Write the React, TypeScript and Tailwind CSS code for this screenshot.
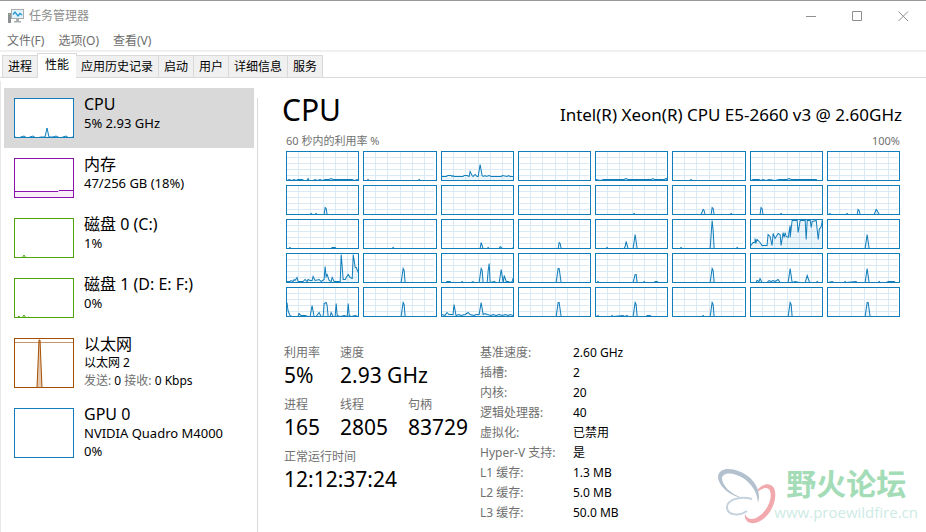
import { useState } from "react"
import clsx from "clsx"

const menus = ["文件(F)", "选项(O)", "查看(V)"]

const tabs = ["进程", "性能", "应用历史记录", "启动", "用户", "详细信息", "服务"]

// inner plot size of one logical processor, baseline is the bottom edge
const W = 71
const H = 28

const SPIKE = "0,28 37,28 39,14 40,16 41,28 71,28"
const SPIKE_WIDE = "0,28 37,28 39,14 40,14 42,28 71,28"

const cores = [
  // row 1
  "0,28 2,27 5,28 7,27 9,28 11,27 15,27 17,28 20,28 21,26 22,28 26,28 28,27 30,28 33,27 35,28 38,27 42,27 44,26 46,27 52,27 58,27 65,27 67,28 70,27 71,28",
  "0,28 3,28 4,27 5,28 54,28 55,27 56,28 71,28",
  "0,24 4,24 6,23 9,23 10,24 11,23 12,24 21,24 22,23 25,23 27,24 28,19 30,23 31,24 33,22 35,24 36,24 38,12 40,23 41,24 43,23 44,24 47,23 49,24 59,24 60,23 65,24 66,23 68,24 71,24",
  "",
  "0,27 4,28 8,27 20,27 28,27 30,26 32,27 40,27 55,27 57,26 58,27 68,27 70,26 71,28",
  "0,28 17,28 18,27 19,28 71,28",
  "0,28 2,27 8,27 10,28 12,27 15,28 18,27 24,28 28,27 36,27 38,26 40,27 50,27 65,27 66,28 71,28",
  "",
  // row 2
  "0,28 23,28 24,27 25,28 28,28 29,27 30,28 37,28 38,21 39,22 40,28 71,28",
  "",
  "",
  "",
  "0,28 37,28 38,27 39,28 71,28",
  "0,28 28,28 30,23 31,24 32,28 38,28 39,21 40,22 41,28 57,28 58,27 59,28 71,28",
  "0,28 9,28 10,21 11,22 12,28 29,28 30,27 31,28 71,28",
  "0,28 2,27 3,28 18,28 19,27 20,28 29,28 30,23 31,24 32,28 46,28 48,23 49,24 51,28 71,28",
  // row 3
  "0,28 2,28 3,27 4,28 44,28 45,27 48,27 49,28 71,28",
  "0,28 28,28 29,27 30,28 71,28",
  "0,28 38,28 39,22 41,28 45,28 46,27 47,28 57,28 58,26 60,28 70,28 71,27",
  "0,28 39,28 40,22 41,23 42,28 71,28",
  "0,28 10,28 11,27 12,28 28,28 29,26 30,21 32,28 37,28 39,14 41,28 71,28",
  "0,28 7,28 8,27 9,28 37,28 39,0 40,10 41,28 63,28 64,27 65,28 71,28",
  "0,25 2,22 4,22 4,18 5,22 6,19 9,22 11,25 16,25 17,14 19,16 21,25 22,13 24,18 27,13 29,14 30,25 32,12 33,17 34,12 35,16 37,17 39,5 39,17 41,0 46,0 47,12 49,0 54,0 55,19 56,0 59,0 60,7 61,1 65,0 67,19 68,9 70,6 71,0",
  "0,28 37,28 39,14 41,28 71,28",
  // row 4
  "0,27 3,27 4,26 6,27 7,25 8,26 10,23 11,27 16,27 18,25 20,27 21,25 23,26 25,26 26,22 28,26 32,25 34,27 37,25 38,12 39,22 40,20 42,26 44,27 45,23 47,27 53,27 54,0 56,25 58,25 59,23 61,20 63,23 65,24 66,0 68,13 69,13 71,18",
  SPIKE,
  "0,28 4,28 5,27 8,27 9,28 19,28 20,27 21,28 29,28 31,27 32,28 37,28 39,14 40,16 41,28 45,28 46,16 47,9 48,28 52,27 54,28 57,28 59,15 61,28 62,21 64,27 66,27 68,28 70,27 71,23",
  SPIKE_WIDE,
  "0,28 1,28 2,27 3,28 37,28 39,20 40,20 41,28 47,28 48,27 49,28 58,28 59,27 61,27 62,28 71,28",
  SPIKE,
  "0,28 5,28 6,26 8,27 9,24 11,28 16,28 18,26 20,27 22,26 24,27 27,25 29,28 37,28 39,14 41,28 44,27 48,28 54,28 56,21 58,27 59,28 65,28 66,27 67,28 71,28",
  "0,28 4,27 6,28 16,28 17,27 18,28 28,27 29,28 37,28 39,14 41,28 50,28 51,27 52,28 58,28 60,27 66,27 67,28 71,28",
  // row 5
  "0,14 1,22 3,27 5,28 11,28 12,25 14,27 18,27 21,28 23,28 25,17 27,28 29,28 32,24 34,28 36,28 37,15 39,14 40,17 41,28 43,28 44,24 46,28 48,28 49,15 50,27 53,28 57,27 60,28 61,15 62,27 64,28 68,27 71,28",
  SPIKE,
  "0,26 3,27 5,24 7,26 10,26 11,26 12,16 14,27 17,26 19,27 23,26 26,24 28,26 32,27 34,26 37,26 39,14 41,26 43,25 45,26 49,27 51,26 54,27 57,26 60,27 63,26 66,27 68,26 71,27",
  SPIKE_WIDE,
  "0,28 2,27 3,28 15,28 16,27 17,28 27,27 28,28 31,27 32,28 37,28 39,14 40,16 41,28 50,28 51,27 54,27 55,28 71,28",
  "0,28 29,28 30,27 31,28 37,28 39,14 40,16 41,28 71,28",
  SPIKE,
  SPIKE_WIDE,
]

const devices = [
  {
    name: "CPU",
    lines: ["5% 2.93 GHz"],
    box: "h-10 border-[#117dbb] text-[#117dbb]",
    points: "0,37 3,38 6,37 9,36 12,38 15,37 18,36 21,38 26,37 30,37 32,28 34,37 38,37 41,36 45,38 48,37 51,36 54,38 58,37",
    height: 38,
  },
  {
    name: "内存",
    lines: ["47/256 GB (18%)"],
    box: "h-10 border-[#8b12ae] text-[#8b12ae]",
    points: "0,31.500 43,31.500 44,30.500 58,30.500",
    height: 38,
  },
  {
    name: "磁盘 0 (C:)",
    lines: ["1%"],
    box: "h-10 border-[#4da60c] text-[#4da60c]",
    points: "0,38 7,38 9,35 11,38 15,38 16,37 17,38 58,38",
    height: 38,
  },
  {
    name: "磁盘 1 (D: E: F:)",
    lines: ["0%"],
    box: "h-10 border-[#4da60c] text-[#4da60c]",
    points: "0,38 2,38 4,36 5,38 7,38 9,35 11,38 14,37 15,38 58,38",
    height: 38,
  },
  {
    name: "以太网",
    lines: [],
    adapter: "以太网 2",
    box: "h-[50px] border-[#a74f01] text-[#a74f01]",
    points: "0,48 22,48 24,0 25,0 27,48 58,48",
    height: 48,
  },
  {
    name: "GPU 0",
    lines: ["NVIDIA Quadro M4000", "0%"],
    box: "h-[50px] border-[#117dbb] text-[#117dbb]",
    points: "",
    height: 48,
  },
]

const specs = [
  ["基准速度:", "2.60 GHz"],
  ["插槽:", "2"],
  ["内核:", "20"],
  ["逻辑处理器:", "40"],
  ["虚拟化:", "已禁用"],
  ["Hyper-V 支持:", "是"],
  ["L1 缓存:", "1.3 MB"],
  ["L2 缓存:", "5.0 MB"],
  ["L3 缓存:", "50.0 MB"],
]

function AppIcon() {
  return (
    <svg width="16" height="14" viewBox="0 0 16 14" fill="none">
      <path d="M0 4h3v10H0z" fill="#8c9093" />
      <path d="M1 5.500h1" stroke="#8fd07a" />
      <rect x="3.500" y="0.500" width="12" height="9" fill="#dff1fb" stroke="#a9adb0" />
      <path d="M5 5.500 7 3l3 4 2-2.500 2 1.500" stroke="#2b9ad1" strokeWidth="1.300" />
      <path d="M8 10h3v2H8zM6 12h7v1.500H6z" fill="#a9adb0" />
    </svg>
  )
}

function TitleBar() {
  return (
    <header className="flex h-[31px] items-center justify-between border-t border-[#999] pl-2">
      <div className="flex items-center gap-[5px] text-[#8e8e8e]">
        <AppIcon />
        <h1>任务管理器</h1>
      </div>
      <div className="flex text-[#8f8f8f]">
        <button aria-label="最小化" className="flex w-[45px] justify-center">
          <svg width="11" height="11" stroke="currentColor"><path d="M0 5.500h10" /></svg>
        </button>
        <button aria-label="最大化" className="flex w-[46px] justify-center">
          <svg width="11" height="11" fill="none" stroke="currentColor"><path d="M.5 .5h9v9h-9z" /></svg>
        </button>
        <button aria-label="关闭" className="flex w-[46px] justify-center">
          <svg width="11" height="11" stroke="currentColor"><path d="M.5 .5l9.500 9.500M10 .5L.5 10" /></svg>
        </button>
      </div>
    </header>
  )
}

function CoreGraph({ points }: { points: string }) {
  return (
    <div className="h-[30px] border border-[#117dbb]">
      <svg className="block h-full w-full" viewBox={`0 0 ${W} ${H}`} preserveAspectRatio="none">
        <path
          d="M11.500 0v28M23.500 0v28M36.500 0v28M48.500 0v28M60.500 0v28M0 5.500h70M0 11.500h70M0 17.500h70M0 23.500h70"
          stroke="#d9eaf4"
          shapeRendering="crispEdges"
        />
        {points && (
          <g transform="translate(0 0.500)">
            <polygon points={`0,${H} ${points} ${W},${H}`} fill="#117dbb" fillOpacity="0.08" />
            <polyline points={points} fill="none" stroke="#117dbb" />
          </g>
        )}
      </svg>
    </div>
  )
}

function Thumb({ device }: { device: (typeof devices)[number] }) {
  const { box, points, height, adapter } = device
  return (
    <div className={clsx("w-[60px] shrink-0 border bg-white", box)}>
      <svg className="block h-full w-full" viewBox={`0 0 58 ${height}`}>
        {adapter && <path d="M0 3.500h58" stroke="currentColor" strokeOpacity="0.600" />}
        {points && (
          <g transform="translate(0 1)">
            <polygon points={`0,${height} ${points} 58,${height}`} fill="currentColor" fillOpacity={adapter ? 0.3 : 0.07} />
            <polyline points={points} fill="none" stroke="currentColor" />
          </g>
        )}
      </svg>
    </div>
  )
}

function Stat({ label, value }: { label: string; value: string }) {
  return (
    <div className="h-[52px]">
      <dt className="leading-5 text-[#707070]">{label}</dt>
      <dd className="text-[21px] leading-6">{value}</dd>
    </div>
  )
}

function Watermark() {
  return (
    <div className="pointer-events-none absolute right-2 bottom-1 flex items-end">
      <svg width="60" height="60" viewBox="0 0 60 60" className="-mr-1">
        <path d="M38 25C42 16 52 13 56 20c5 12-5 32-19 35-7 1-11-3-10-9 2 5 6 6 11 4 10-5 17-18 14-27-2-5-8-3-14 2z" fill="#f2a9ad" />
        <path d="M25 30C10 28 0 16 0 9 1-3 20 0 31 9c8 7 12 16 9 26-1-11-6-19-15-25C15 4 5 4 4 10c0 7 8 16 21 20z" fill="#b3c1cf" />
        <path d="M34 31C20 27 8 33 9 40c1 8 13 8 20 3" fill="none" stroke="#c5d3de" strokeWidth="2" />
      </svg>
      <div className="flex flex-col items-center pb-1">
        <span className="text-3xl leading-8 font-bold text-[#a3dcb7]">野火论坛</span>
        <span className="font-['Open_Sans','Noto_Sans',sans-serif] text-[15px] leading-6 text-[#cdebe5]">www.proewildfire.cn</span>
      </div>
    </div>
  )
}

export default function App() {
  const [tab, setTab] = useState("性能")
  const [selected, setSelected] = useState("CPU")

  return (
    <div className="relative flex min-h-screen flex-col bg-white font-['Noto_Sans','Noto_Sans_CJK_SC',sans-serif] text-xs text-black">
      <TitleBar />

      <nav className="flex h-[21px] items-center gap-[14px] border-b-2 border-[#f0f0f0] pl-[7px] text-[#6d6d6d]">
        {menus.map((menu) => (
          <button key={menu}>{menu}</button>
        ))}
      </nav>

      <div role="tablist" className="flex h-[26px] items-end border-b border-[#d9d9d9] pl-[2px]">
        {tabs.map((name) => (
          <button
            key={name}
            role="tab"
            aria-selected={tab === name}
            onClick={() => setTab(name)}
            className={clsx(
              "border-t border-r border-[#d9d9d9] first:border-l",
              tab === name ? "-mx-px -mb-px h-[25px] border-l bg-white px-[7px] pb-0.5" : "h-[22px] bg-[#f0f0f0] px-[5px]"
            )}
          >
            {name}
          </button>
        ))}
      </div>

      <div className="mt-[3px] flex grow border-l border-[#e8e8e8]">
        <aside className="w-[253px] shrink-0 pt-[7px] pl-[3px]">
          {devices.map((device) => (
            <button
              key={device.name}
              onClick={() => setSelected(device.name)}
              className={clsx(
                "flex w-full items-start gap-[10px] p-[10px] text-left",
                selected === device.name && "bg-[#d9d9d9]"
              )}
            >
              <Thumb device={device} />
              <div className="-my-1 text-[13px] leading-[18px]">
                <div className="text-base leading-5">{device.name}</div>
                {device.lines.map((line) => (
                  <div key={line}>{line}</div>
                ))}
                {device.adapter && (
                  <>
                    <div className="text-xs leading-[18px]">{device.adapter}</div>
                    <div className="text-xs leading-[18px]">
                      <span className="text-[#707070]">发送:</span> 0 <span className="text-[#707070]">接收:</span> 0 Kbps
                    </div>
                  </>
                )}
              </div>
            </button>
          ))}
        </aside>

        <main className="mt-[17px] ml-[3px] grow border-l border-[#d9d9d9] pr-[26px] pl-7">
          <div className="-mr-0.5 -ml-1 flex items-baseline justify-between">
            <h2 className="text-3xl leading-6">CPU</h2>
            <span className="text-[17px] leading-6">Intel(R) Xeon(R) CPU E5-2660 v3 @ 2.60GHz</span>
          </div>
          <div className="mt-1 flex justify-between text-[11px] leading-5 text-[#707070]">
            <span>60 秒内的利用率 %</span>
            <span>100%</span>
          </div>

          <div className="grid grid-cols-8 gap-1">
            {cores.map((points, i) => (
              <CoreGraph key={i} points={points} />
            ))}
          </div>

          <div className="mt-[26px] -ml-0.5 flex">
            <dl className="grid w-[196px] grid-cols-[56px_68px_72px] content-start">
              <Stat label="利用率" value="5%" />
              <div className="col-span-2">
                <Stat label="速度" value="2.93 GHz" />
              </div>
              <Stat label="进程" value="165" />
              <Stat label="线程" value="2805" />
              <Stat label="句柄" value="83729" />
              <div className="col-span-3">
                <Stat label="正常运行时间" value="12:12:37:24" />
              </div>
            </dl>
            <dl className="grid grid-cols-[93px_auto] content-start leading-5">
              {specs.map(([label, value]) => (
                <div key={label} className="contents">
                  <dt className="text-[#707070]">{label}</dt>
                  <dd>{value}</dd>
                </div>
              ))}
            </dl>
          </div>
        </main>
      </div>

      <Watermark />
    </div>
  )
}
